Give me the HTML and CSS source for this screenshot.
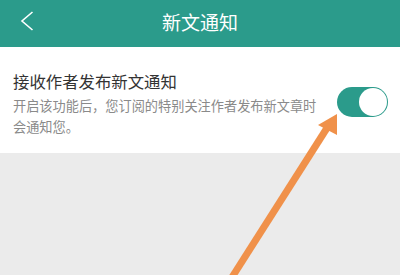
FILE: index.html
```html
<!DOCTYPE html>
<html lang="zh">
<head>
<meta charset="utf-8">
<link rel="stylesheet" href="styles.css">
</head>
<body>
<div class="page">
  <header class="topbar">
    <svg class="back" width="14" height="20" viewBox="0 0 14 20"><path d="M12.5 1 L2 10 L12.5 19" fill="none" stroke="#fff" stroke-width="1.6" stroke-linejoin="miter"/></svg>
    <h1 class="title">新文通知</h1>
  </header>
  <section class="setting">
    <div class="text">
      <div class="label">接收作者发布新文通知</div>
      <div class="desc">开启该功能后，您订阅的特别关注作者发布新文章时会通知您。</div>
    </div>
    <div class="switch"><div class="knob"></div></div>
  </section>
  <div class="rest"></div>
  <svg class="arrow" width="400" height="275" viewBox="0 0 400 275">
    <line x1="229" y1="282" x2="327" y2="128" stroke="#f0914a" stroke-width="7"/>
    <polygon points="337,114 318,125 337,135" fill="#f0914a"/>
  </svg>
</div>
</body>
</html>
```
FILE: styles.css
```css
* { box-sizing: border-box; margin: 0; padding: 0; }
html, body { width: 400px; height: 275px; overflow: hidden; }
body { font-family: "Noto Sans CJK SC", "Noto Sans", sans-serif; background: #ebebeb; }
.page { position: relative; width: 400px; height: 275px; display: flex; flex-direction: column; }
.topbar { height: 47px; background: #2b9b8b; display: flex; align-items: center; justify-content: center; position: relative; }
.back { position: absolute; left: 20px; top: 11px; }
.title { color: #fff; font-size: 19px; font-weight: 400; line-height: 1; margin-top: -4px; }
.setting { background: #fff; height: 106px; display: flex; align-items: center; padding: 0 12px 0 13px; gap: 18px; }
.text { flex: 1; margin-top: 8px; }
.label { font-size: 16.4px; color: #333; line-height: 20px; }
.desc { font-size: 13.2px; color: #8a8a8a; line-height: 21px; margin-top: 4px; }
.switch { width: 51px; height: 30px; border-radius: 15px; background: #2b9b8b; position: relative; flex: none; margin-top: 4px; }
.knob { position: absolute; right: 1px; top: 1px; width: 28px; height: 28px; border-radius: 50%; background: #fff; }
.rest { flex: 1; background: #ebebeb; }
.arrow { position: absolute; left: 0; top: 0; pointer-events: none; }
```
